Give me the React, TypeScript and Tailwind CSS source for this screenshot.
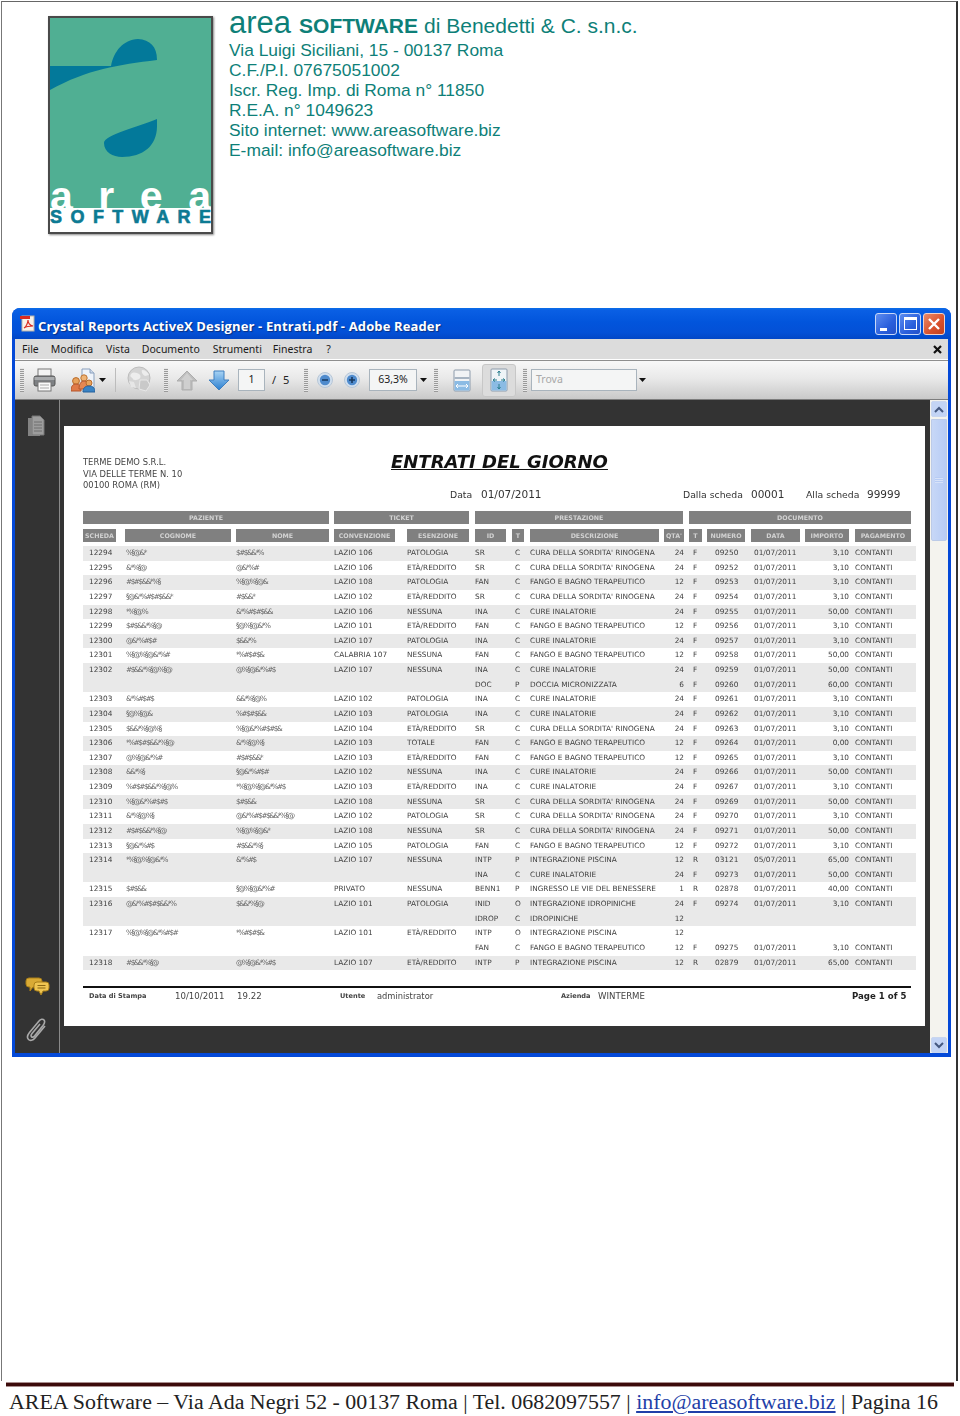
import React from "react";

const CURA = "CURA DELLA SORDITA' RINOGENA";
const FANGO = "FANGO E BAGNO TERAPEUTICO";
const INAL = "CURE INALATORIE";
const PISC = "INTEGRAZIONE PISCINA";
const DAY = "01/07/2011";

type Line = [string, string, string, string, string, string, string, string];
type Row = {
  scheda: string;
  cognome: number;
  nome: number;
  conv: string;
  esen: string;
  lines: Line[];
};

const cure = (id: string, desc: string, qta: string, num: string, imp: string): Line => [
  id,
  "C",
  desc,
  qta,
  "F",
  num,
  DAY,
  imp,
];

const rows: Row[] = [
  { scheda: "12294", cognome: 20, nome: 28, conv: "LAZIO 106", esen: "PATOLOGIA", lines: [cure("SR", CURA, "24", "09250", "3,10")] },
  { scheda: "12295", cognome: 20, nome: 22, conv: "LAZIO 106", esen: "ETÀ/REDDITO", lines: [cure("SR", CURA, "24", "09252", "3,10")] },
  { scheda: "12296", cognome: 37, nome: 30, conv: "LAZIO 108", esen: "PATOLOGIA", lines: [cure("FAN", FANGO, "12", "09253", "3,10")] },
  { scheda: "12297", cognome: 50, nome: 20, conv: "LAZIO 102", esen: "ETÀ/REDDITO", lines: [cure("SR", CURA, "24", "09254", "3,10")] },
  { scheda: "12298", cognome: 22, nome: 38, conv: "LAZIO 106", esen: "NESSUNA", lines: [cure("INA", INAL, "24", "09255", "50,00")] },
  { scheda: "12299", cognome: 38, nome: 36, conv: "LAZIO 101", esen: "ETÀ/REDDITO", lines: [cure("FAN", FANGO, "12", "09256", "3,10")] },
  { scheda: "12300", cognome: 30, nome: 22, conv: "LAZIO 107", esen: "PATOLOGIA", lines: [cure("INA", INAL, "24", "09257", "3,10")] },
  { scheda: "12301", cognome: 42, nome: 28, conv: "CALABRIA 107", esen: "NESSUNA", lines: [cure("FAN", FANGO, "12", "09258", "50,00")] },
  {
    scheda: "12302",
    cognome: 48,
    nome: 37,
    conv: "LAZIO 107",
    esen: "NESSUNA",
    lines: [
      cure("INA", INAL, "24", "09259", "50,00"),
      ["DOC", "P", "DOCCIA MICRONIZZATA", "6", "F", "09260", DAY, "60,00"],
    ],
  },
  { scheda: "12303", cognome: 30, nome: 32, conv: "LAZIO 102", esen: "PATOLOGIA", lines: [cure("INA", INAL, "24", "09261", "3,10")] },
  { scheda: "12304", cognome: 24, nome: 30, conv: "LAZIO 103", esen: "PATOLOGIA", lines: [cure("INA", INAL, "24", "09262", "3,10")] },
  { scheda: "12305", cognome: 38, nome: 48, conv: "LAZIO 104", esen: "ETÀ/REDDITO", lines: [cure("SR", CURA, "24", "09263", "3,10")] },
  { scheda: "12306", cognome: 52, nome: 30, conv: "LAZIO 103", esen: "TOTALE", lines: [cure("FAN", FANGO, "12", "09264", "0,00")] },
  { scheda: "12307", cognome: 34, nome: 30, conv: "LAZIO 103", esen: "ETÀ/REDDITO", lines: [cure("FAN", FANGO, "12", "09265", "3,10")] },
  { scheda: "12308", cognome: 22, nome: 36, conv: "LAZIO 102", esen: "NESSUNA", lines: [cure("INA", INAL, "24", "09266", "50,00")] },
  { scheda: "12309", cognome: 52, nome: 50, conv: "LAZIO 103", esen: "ETÀ/REDDITO", lines: [cure("INA", INAL, "24", "09267", "3,10")] },
  { scheda: "12310", cognome: 45, nome: 22, conv: "LAZIO 108", esen: "NESSUNA", lines: [cure("SR", CURA, "24", "09269", "50,00")] },
  { scheda: "12311", cognome: 28, nome: 62, conv: "LAZIO 102", esen: "PATOLOGIA", lines: [cure("SR", CURA, "24", "09270", "3,10")] },
  { scheda: "12312", cognome: 42, nome: 36, conv: "LAZIO 108", esen: "NESSUNA", lines: [cure("SR", CURA, "24", "09271", "50,00")] },
  { scheda: "12313", cognome: 32, nome: 32, conv: "LAZIO 105", esen: "PATOLOGIA", lines: [cure("FAN", FANGO, "12", "09272", "3,10")] },
  {
    scheda: "12314",
    cognome: 42,
    nome: 20,
    conv: "LAZIO 107",
    esen: "NESSUNA",
    lines: [
      ["INTP", "P", PISC, "12", "R", "03121", "05/07/2011", "65,00"],
      cure("INA", INAL, "24", "09273", "50,00"),
    ],
  },
  {
    scheda: "12315",
    cognome: 22,
    nome: 40,
    conv: "PRIVATO",
    esen: "NESSUNA",
    lines: [["BENN1", "P", "INGRESSO LE VIE DEL BENESSERE", "1", "R", "02878", DAY, "40,00"]],
  },
  {
    scheda: "12316",
    cognome: 50,
    nome: 30,
    conv: "LAZIO 101",
    esen: "PATOLOGIA",
    lines: [
      ["INID", "O", "INTEGRAZIONE IDROPINICHE", "24", "F", "09274", DAY, "3,10"],
      ["IDROP", "C", "IDROPINICHE", "12", "", "", "", ""],
    ],
  },
  {
    scheda: "12317",
    cognome: 52,
    nome: 28,
    conv: "LAZIO 101",
    esen: "ETÀ/REDDITO",
    lines: [
      ["INTP", "O", PISC, "12", "", "", "", ""],
      cure("FAN", FANGO, "12", "09275", "3,10"),
    ],
  },
  {
    scheda: "12318",
    cognome: 33,
    nome: 38,
    conv: "LAZIO 107",
    esen: "ETÀ/REDDITO",
    lines: [["INTP", "P", PISC, "12", "R", "02879", DAY, "65,00"]],
  },
];

// smudged names: the source picture has them scrambled on purpose
const SCRAMBLE = "%&#§*$@%#&§$*@&%";
const smudge = (width: number, seed: number) => {
  let out = "";
  const count = Math.round(width / 4.3);
  for (let i = 0; i < count; i++) out += SCRAMBLE[(i * 3 + seed) % SCRAMBLE.length];
  return out;
};

const subHeads = [
  ["SCHEDA", "w-[33px]"],
  ["COGNOME", "w-[106px] ml-[9px]"],
  ["NOME", "w-[93px] ml-[5px]"],
  ["CONVENZIONE", "w-[61px] ml-[5px]"],
  ["ESENZIONE", "w-[62px] ml-[12px]"],
  ["ID", "w-[31px] ml-[6px]"],
  ["T", "w-[12px] ml-[6px]"],
  ["DESCRIZIONE", "w-[129px] ml-[6px]"],
  ["QTA'", "w-[20px] ml-[5px]"],
  ["T", "w-[13px] ml-[5px]"],
  ["NUMERO", "w-[38px] ml-[5px]"],
  ["DATA", "w-[49px] ml-[6px]"],
  ["IMPORTO", "w-[44px] ml-[5px]"],
  ["PAGAMENTO", "w-[56px] ml-[6px]"],
];

const groupHeads = [
  ["PAZIENTE", "w-[246px]"],
  ["TICKET", "w-[135px] ml-[5px]"],
  ["PRESTAZIONE", "w-[208px] ml-[6px]"],
  ["DOCUMENTO", "w-[222px] ml-[6px]"],
];

const Head = ({ label, cls, h }: { label: string; cls: string; h: string }) => (
  <div className={`${cls} ${h} flex items-center justify-center overflow-hidden bg-[#808080] text-[6.3px] font-bold text-[#d2d2d2]`}>
    {label}
  </div>
);

const Grip = ({ cls }: { cls: string }) => (
  <div className={`${cls} h-[24px] w-[4px] bg-[repeating-linear-gradient(0deg,#9a9a9a_0,#9a9a9a_1px,#e8e8e8_1px,#e8e8e8_2px)]`} />
);

const DropArrow = ({ cls }: { cls: string }) => (
  <svg className={cls} width="7" height="4" viewBox="0 0 7 4">
    <path d="M0 0h7L3.5 4z" fill="#111" />
  </svg>
);

const ToolInput = ({ cls, text, tone }: { cls: string; text: string; tone: string }) => (
  <div className={`${cls} flex h-[22px] items-center border border-[#a9b4bd] bg-[#f4f5f5] text-[10.5px] ${tone}`}>{text}</div>
);

const PrintIcon = () => (
  <svg className="ml-[9px]" width="23" height="24" viewBox="0 0 23 24">
    <rect x="5" y="1" width="13" height="8" fill="#f4f4f4" stroke="#777" />
    <rect x="1" y="8" width="21" height="10" rx="2" fill="#7e8184" stroke="#555" />
    <rect x="1.5" y="9" width="20" height="3" fill="#a9abad" />
    <rect x="5" y="14" width="13" height="9" fill="#fafafa" stroke="#777" />
    <path d="M7 17h9M7 20h9" stroke="#aaa" />
  </svg>
);

const PeopleIcon = () => (
  <svg className="ml-[15px]" width="24" height="25" viewBox="0 0 24 25">
    <path d="M11 1h8l4 4v15H11z" fill="#eef3fa" stroke="#8aa0bd" />
    <path d="M19 1v4h4" fill="#cdd9ea" stroke="#8aa0bd" />
    <circle cx="5" cy="13" r="3.4" fill="#e8a35c" stroke="#b96a2a" />
    <path d="M0 23c0-5 2-7 5-7s5 2 5 7z" fill="#e07a48" stroke="#b5552b" />
    <circle cx="13" cy="10" r="3.2" fill="#efb476" stroke="#bd7433" />
    <path d="M8 21c0-5 2-8 5-8s5 3 5 8z" fill="#e58752" stroke="#b5552b" />
    <circle cx="18" cy="15" r="3" fill="#e8a35c" stroke="#b96a2a" />
    <path d="M12 24c0-4 2-6 6-6s6 2 6 6z" fill="#3a83c4" stroke="#25619c" />
  </svg>
);

const GlobeIcon = () => (
  <svg className="ml-[10px]" width="28" height="28" viewBox="0 0 28 28">
    <circle cx="13" cy="12" r="11" fill="#d4d4d4" stroke="#bdbdbd" />
    <path d="M5 8c3-3 6-1 8 0s2 4 0 5-5 2-6 0-4-2-2-5zM16 4c3 0 6 2 7 5l-4 1c-2-1-4-4-3-6z" fill="#ededed" />
    <path d="M14 14l7 0 3 5-4 6-7-2z" fill="#c9c9c9" stroke="#e8e8e8" />
    <path d="M3 15l5 1 2 6-5-1z" fill="#e6e6e6" />
  </svg>
);

const UpArrow = () => (
  <svg className="ml-[8px]" width="22" height="21" viewBox="0 0 22 21">
    <path d="M11 1l10 10h-5v9H6v-9H1z" fill="#bdbdbd" stroke="#adadad" />
    <path d="M11 3l6 7h-3v9H8v-9H5z" fill="#cfcfcf" />
  </svg>
);

const DownArrow = () => (
  <svg className="ml-[10px]" width="22" height="21" viewBox="0 0 22 21">
    <defs>
      <linearGradient id="down" x1="0" y1="0" x2="0" y2="1">
        <stop offset="0" stopColor="#a8d3f4" />
        <stop offset="1" stopColor="#2b7fd0" />
      </linearGradient>
    </defs>
    <path d="M6 1h10v9h5L11 20 1 10h5z" fill="url(#down)" stroke="#3f7fbf" />
  </svg>
);

const ZoomBtn = ({ cls, plus }: { cls: string; plus?: boolean }) => (
  <svg className={cls} width="16" height="16" viewBox="0 0 16 16">
    <circle cx="8" cy="8" r="7.5" fill="#d1dfee" stroke="#b7c6d6" />
    <circle cx="8" cy="8" r="5.2" fill="#4f8bcd" />
    <path d={plus ? "M5 8h6M8 5v6" : "M5 8h6"} stroke="#16385f" strokeWidth="1.6" />
  </svg>
);

const FitWidthIcon = () => (
  <svg className="ml-[15px]" width="18" height="23" viewBox="0 0 18 23">
    <rect x="1" y="1" width="16" height="21" rx="1" fill="#f1f3f5" stroke="#8d9bab" />
    <rect x="1.5" y="8" width="15" height="2" fill="#a7b4c2" />
    <rect x="1.5" y="12" width="15" height="9.5" fill="#8bbbe4" />
    <path d="M3 17h12M3 17l2-2M3 17l2 2M15 17l-2-2M15 17l-2 2" stroke="#fff" />
  </svg>
);

const FitPageIcon = () => (
  <svg width="18" height="24" viewBox="0 0 18 24">
    <rect x="1" y="1" width="16" height="22" rx="1" fill="#eef4f7" stroke="#8d9bab" />
    <rect x="1.5" y="13" width="15" height="9.5" fill="#8bbbe4" />
    <path
      d="M9 3v5M7.5 5L9 3l1.5 2M9 16v5M7.5 19L9 21l1.5-2M3 12h4M5 10.5L3 12l2 1.5M11 12h4M13 10.5l2 1.500-2 1.500"
      stroke="#2a7f8f"
      fill="none"
    />
  </svg>
);

const LogoMark = () => (
  <svg width="161" height="214" viewBox="2 2 161 214" className="block">
    <rect x="2" y="2" width="161" height="214" fill="#fff" />
    <rect x="2" y="2" width="161" height="192" fill="#50af93" />
    <path d="M2 50L63 50C66 35 75 24 90 23C102 24 109 30 109 44C70 49 40 53 2 74Z" fill="#03799a" />
    <path d="M109 103C90 111 56 119 56 127C56 136 65 141 74 141C95 141 109 130 109 110Z" fill="#03799a" />
    <text x="2" y="194" fontFamily="Liberation Sans" fontWeight="700" fontSize="41" fill="#fff" textLength="161" lengthAdjust="spacing">
      area
    </text>
    <rect x="2" y="192" width="161" height="24" fill="#fff" />
    <text
      x="2"
      y="207"
      fontFamily="Liberation Sans"
      fontWeight="700"
      fontSize="18"
      fill="#0d7a93"
      stroke="#0d7a93"
      strokeWidth="0.6"
      textLength="161"
      lengthAdjust="spacing"
    >
      SOFTWARE
    </text>
  </svg>
);

const Letterhead = () => (
  <div className="ml-[16px] font-['Liberation_Sans',Arial,sans-serif] text-[#0e7f78]">
    <div className="mt-[-11px] flex h-[36px] items-baseline whitespace-nowrap">
      <span className="text-[31px] leading-[36px]">area</span>
      <span className="ml-[8px] text-[21px] font-bold leading-[36px]">SOFTWARE</span>
      <span className="ml-[6px] text-[21px] leading-[36px]">di Benedetti &amp; C. s.n.c.</span>
    </div>
    <div className="mt-[-1px] text-[17.4px] leading-[20px]">
      <div>Via Luigi Siciliani, 15 - 00137 Roma</div>
      <div>C.F./P.I. 07675051002</div>
      <div>Iscr. Reg. Imp. di Roma n° 11850</div>
      <div>R.E.A. n° 1049623</div>
      <div>Sito internet: www.areasoftware.biz</div>
      <div>E-mail: info@areasoftware.biz</div>
    </div>
  </div>
);

const TitleBar = () => (
  <div className="flex h-[31px] items-center bg-[linear-gradient(180deg,#0a6de8_0,#0a5fe4_8%,#0255dc_45%,#0350d6_80%,#0247c6_100%)] pl-[8px] pr-[6px]">
    <svg width="16" height="17" viewBox="0 0 16 17">
      <rect x="2" y="1" width="12" height="15" fill="#f7f2ea" stroke="#b9b3aa" />
      <rect x="0" y="1" width="10" height="3" fill="#d92b22" />
      <path d="M4 13c2-1 4-5 4-8 0 3 1 5 5 6-3 0-6 0-9 2z" fill="none" stroke="#d92b22" strokeWidth="1.2" />
    </svg>
    <span className="ml-[2px] mt-[6px] font-['Open_Sans',sans-serif] text-[13px] font-bold tracking-[0.13px] whitespace-nowrap text-white [text-shadow:1px_1px_1px_#0b2f7f]">
      Crystal Reports ActiveX Designer - Entrati.pdf - Adobe Reader
    </span>
    <div className="ml-auto flex items-center gap-[2px]">
      <div className="flex h-[22px] w-[22px] items-end rounded-[3px] border border-[#c8d8f8] bg-[linear-gradient(135deg,#5d8df0,#2a5fdc_60%,#2350c8)] pb-[3px] pl-[4px]">
        <div className="h-[3px] w-[7px] bg-white" />
      </div>
      <div className="flex h-[22px] w-[22px] items-center justify-center rounded-[3px] border border-[#c8d8f8] bg-[linear-gradient(135deg,#5d8df0,#2a5fdc_60%,#2350c8)]">
        <div className="h-[13px] w-[13px] border border-t-[3px] border-white" />
      </div>
      <div className="flex h-[22px] w-[22px] items-center justify-center rounded-[3px] border border-[#f2d2c8] bg-[linear-gradient(135deg,#e98a68,#d8502c_60%,#c0401f)]">
        <svg width="14" height="14" viewBox="0 0 14 14">
          <path d="M2 2l10 10M12 2L2 12" stroke="#fff" strokeWidth="2.4" />
        </svg>
      </div>
    </div>
  </div>
);

const menus = [
  ["File", "ml-[7px]"],
  ["Modifica", "ml-[12px]"],
  ["Vista", "ml-[13px]"],
  ["Documento", "ml-[12px]"],
  ["Strumenti", "ml-[13px]"],
  ["Finestra", "ml-[11px]"],
  ["?", "ml-[14px]"],
];

const MenuBar = () => (
  <div className="flex h-[22px] items-center border-b border-b-[#8e8e8e] bg-[#dcdcdc] text-[10.5px] text-[#1a1a1a] shadow-[inset_0_-1px_0_#fff]">
    {menus.map(([label, cls]) => (
      <span key={label} className={cls}>
        {label}
      </span>
    ))}
    <svg className="ml-auto mr-[6px]" width="9" height="9" viewBox="0 0 9 9">
      <path d="M1 1l7 7M8 1L1 8" stroke="#111" strokeWidth="2.2" />
    </svg>
  </div>
);

const ToolBar = () => (
  <div className="flex h-[39px] items-center border-b border-b-[#7d7d7d] bg-[linear-gradient(180deg,#f8f8f8_0,#e9e9e9_45%,#c9c9c9_100%)]">
    <Grip cls="ml-[5px]" />
    <PrintIcon />
    <PeopleIcon />
    <DropArrow cls="ml-[4px]" />
    <div className="ml-[9px] h-[24px] w-px bg-[#bcbcbc]" />
    <GlobeIcon />
    <Grip cls="ml-[10px]" />
    <UpArrow />
    <DownArrow />
    <ToolInput cls="ml-[8px] w-[27px] justify-center text-[#222]" text="1" tone="" />
    <div className="ml-[7px] flex w-[26px] text-[11px] text-[#222]">
      <span>/</span>
      <span className="ml-[7px]">5</span>
    </div>
    <Grip cls="ml-[6px]" />
    <ZoomBtn cls="ml-[9px]" />
    <ZoomBtn cls="ml-[11px]" plus />
    <ToolInput cls="ml-[9px] w-[48px] justify-center text-[#222]" text="63,3%" tone="" />
    <DropArrow cls="ml-[3px]" />
    <Grip cls="ml-[7px]" />
    <FitWidthIcon />
    <div className="ml-[11px] flex h-[33px] w-[34px] items-center justify-center rounded-[3px] border border-[#c7c7c7] bg-[#dcdcdc]">
      <FitPageIcon />
    </div>
    <Grip cls="ml-[7px]" />
    <ToolInput cls="ml-[4px] w-[106px] pl-[4px]" text="Trova" tone="text-[#a8a8a8]" />
    <DropArrow cls="ml-[2px]" />
  </div>
);

const SidePanel = () => (
  <div className="flex w-[45px] shrink-0 flex-col border-r border-r-[#8a8a8a] bg-[#333333] pl-[10px]">
    <svg className="mt-[15px] ml-[2px]" width="18" height="22" viewBox="0 0 18 22">
      <path d="M5 1h8l4 4v15H5z" fill="#9d9d9d" stroke="#777" />
      <path d="M1 3h4v17h8v1H1z" fill="#838383" />
      <path d="M7 7h8M7 10h8M7 13h8M7 16h8" stroke="#6e6e6e" />
    </svg>
    <svg className="mt-[540px]" width="25" height="19" viewBox="0 0 25 19">
      <path d="M4 1h10a3 3 0 0 1 3 3v3a3 3 0 0 1-3 3H8l-3 4v-4H4a3 3 0 0 1-3-3V4a3 3 0 0 1 3-3z" fill="#d9aa35" stroke="#a97f18" />
      <path d="M12 5h9a3 3 0 0 1 3 3v3a3 3 0 0 1-3 3h-3l-2 4-2-4h-2a3 3 0 0 1-3-3V8a3 3 0 0 1 3-3z" fill="#efc552" stroke="#a97f18" />
      <path d="M12.500 8.500h8M12.500 11h8" stroke="#8a6712" />
    </svg>
    <svg className="mt-[22px] ml-px" width="22" height="26" viewBox="0 0 22 26" fill="none">
      <path
        d="M19 8L9 20c-2 2.500-5 3-6.500 1.500S1.500 17 3.500 14.500L13 3c1.500-2 4-2.200 5-1s.5 3.500-1 5.500L8.500 18c-1 1.200-2.200 1.500-3 .8s-.4-2 .5-3.200L14 6"
        stroke="#a9a9a9"
        strokeWidth="1.6"
      />
    </svg>
  </div>
);

const Rows = () => {
  const cell = "overflow-visible whitespace-nowrap";
  const name = `${cell} tracking-[-1.5px] text-[#666] blur-[0.7px]`;
  return (
    <div className="mt-[4px] w-[833px] text-[7.35px] leading-[13px] text-[#404040]">
      {rows.map((row, i) => (
        <div key={row.scheda} className={i % 2 === 0 ? "bg-[#e9e9e9]" : "bg-white"}>
          {row.lines.map((line, j) => (
            <div
              key={j}
              className="grid h-[14.63px] grid-cols-[42px_111px_98px_73px_68px_40px_15px_134px_20px_31px_39px_51px_44px_65px]"
            >
              <div className={`${cell} pl-[6px]`}>{j === 0 ? row.scheda : ""}</div>
              <div className={`${name} pl-px`}>{j === 0 ? smudge(row.cognome, i) : ""}</div>
              <div className={name}>{j === 0 ? smudge(row.nome, i + 5) : ""}</div>
              <div className={cell}>{j === 0 ? row.conv : ""}</div>
              <div className={cell}>{j === 0 ? row.esen : ""}</div>
              <div className={cell}>{line[0]}</div>
              <div className={cell}>{line[1]}</div>
              <div className={cell}>{line[2]}</div>
              <div className={`${cell} text-right`}>{line[3]}</div>
              <div className={`${cell} pl-[9px]`}>{line[4]}</div>
              <div className={cell}>{line[5]}</div>
              <div className={cell}>{line[6]}</div>
              <div className={`${cell} text-right`}>{line[7]}</div>
              <div className={`${cell} pl-[6px]`}>{line[7] ? "CONTANTI" : ""}</div>
            </div>
          ))}
        </div>
      ))}
    </div>
  );
};

const ReportPage = () => (
  <div className="h-[600px] w-[861px] shrink-0 bg-white pl-[19px] font-['DejaVu_Sans',Verdana,sans-serif] blur-[0.3px]">
    <div className="h-[85px]">
      <div className="w-[200px] pt-[31px] text-[8.4px] leading-[11.5px] text-[#444]">
        <div>TERME DEMO S.R.L.</div>
        <div>VIA DELLE TERME N. 10</div>
        <div>00100 ROMA (RM)</div>
      </div>
    </div>
    <div className="mt-[-85px] h-[85px]">
      <div className="ml-[308px] pt-[24px] text-[18px] font-bold italic leading-[24px] text-[#111] underline whitespace-nowrap">
        ENTRATI DEL GIORNO
      </div>
      <div className="mt-[13px] flex items-baseline whitespace-nowrap text-[10.5px] leading-[14px] text-[#333]">
        <span className="ml-[367px] w-[31px] text-[9.3px]">Data</span>
        <span className="w-[202px]">01/07/2011</span>
        <span className="w-[68px] text-[9.3px]">Dalla scheda</span>
        <span className="w-[55px]">00001</span>
        <span className="w-[61px] text-[9.3px]">Alla scheda</span>
        <span>99999</span>
      </div>
    </div>
    <div className="flex">
      {groupHeads.map(([label, cls]) => (
        <Head key={label} label={label} cls={cls} h="h-[13px]" />
      ))}
    </div>
    <div className="mt-[5px] flex">
      {subHeads.map(([label, cls], i) => (
        <Head key={i} label={label} cls={cls} h="h-[13px]" />
      ))}
    </div>
    <Rows />
    <div className="mt-[16px] h-[2px] w-[828px] bg-[#111]" />
    <div className="mt-[2px] flex items-center whitespace-nowrap text-[#444]">
      <span className="ml-[6px] w-[86px] text-[6.6px] font-bold">Data di Stampa</span>
      <span className="w-[62px] text-[8.6px]">10/10/2011</span>
      <span className="w-[103px] text-[8.6px]">19.22</span>
      <span className="w-[37px] text-[6.6px] font-bold">Utente</span>
      <span className="w-[184px] text-[8.3px]">administrator</span>
      <span className="w-[37px] text-[6.6px] font-bold">Azienda</span>
      <span className="w-[254px] text-[8.6px]">WINTERME</span>
      <span className="text-[8.6px] font-bold text-[#222]">Page 1 of 5</span>
    </div>
  </div>
);

const ScrollBtn = ({ down }: { down?: boolean }) => (
  <div className="mx-px flex h-[16px] items-center justify-center rounded-[2px] border border-[#c9d6ef] bg-[#c3d4f5]">
    <svg width="10" height="7" viewBox="0 0 10 7">
      <path d={down ? "M1 1l4 4 4-4" : "M1 6l4-4 4 4"} fill="none" stroke="#44587f" strokeWidth="2" />
    </svg>
  </div>
);

const ScrollBar = () => (
  <div className="ml-[5px] flex w-[18px] shrink-0 flex-col bg-[#f4f3ee] pt-px">
    <ScrollBtn />
    <div className="mx-px mt-[2px] flex h-[122px] items-center justify-center rounded-b-[2px] border border-[#bccbe8] bg-[linear-gradient(90deg,#c7d7f7,#b7ccf5)]">
      <div className="h-[6px] w-[8px] bg-[repeating-linear-gradient(0deg,#d7e2f8_0,#d7e2f8_1px,#b7ccf5_1px,#b7ccf5_2px)]" />
    </div>
    <div className="flex-1" />
    <ScrollBtn down />
  </div>
);

const ReaderWindow = () => (
  <div className="ml-[10px] mt-[74px] h-[749px] w-[939px] overflow-hidden rounded-t-[8px] bg-[#0449d8] font-['Noto_Sans',sans-serif]">
    <TitleBar />
    <div className="mx-[3px] mb-[4px]">
      <MenuBar />
      <ToolBar />
      <div className="flex h-[653px] bg-[#333333]">
        <SidePanel />
        <div className="flex-1 pl-[4px] pt-[26px]">
          <ReportPage />
        </div>
        <ScrollBar />
      </div>
    </div>
  </div>
);

export default function App() {
  return (
    <div className="h-[1416px] w-[960px] overflow-hidden bg-white">
      <div className="ml-px mt-px h-[1380px] w-[957px] border-t border-l border-r-2 border-t-[#666] border-l-[#777] border-r-[#333]">
        <div className="flex pl-[46px] pt-[14px]">
          <div className="border-2 border-[#4a4a4a] shadow-[1px_1px_2px_#888]">
            <LogoMark />
          </div>
          <Letterhead />
        </div>
        <ReaderWindow />
      </div>
      <div className="mx-[6px] mt-px h-[5px] border-y border-y-[#a98f8f] bg-[#3c0b0b]" />
      <div className="pl-[9px] pt-[2px] font-['Liberation_Serif',serif] text-[21.9px] leading-[26px] whitespace-nowrap text-[#222]">
        AREA Software – Via Ada Negri 52 - 00137 Roma | Tel. 0682097557 |{" "}
        <span className="text-[#1f3fa8] underline">info@areasoftware.biz</span> | Pagina 16
      </div>
    </div>
  );
}
